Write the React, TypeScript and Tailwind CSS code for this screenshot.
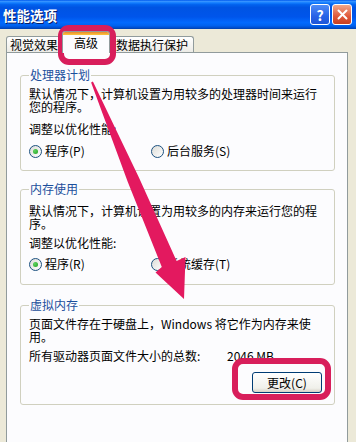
import React from "react";

const font = { fontFamily: '"Noto Sans CJK SC", "Noto Sans", sans-serif' };

function Radio({ checked }: { checked?: boolean }) {
  return (
    <span className="relative inline-flex h-[13px] w-[13px] shrink-0 items-center justify-center rounded-full border border-[#1c5180] bg-[linear-gradient(135deg,#dcdcd7,#ffffff)]">
      {checked && (
        <span className="h-[5px] w-[5px] rounded-full bg-[radial-gradient(circle_at_35%_35%,#5fd35f,#21a121)]" />
      )}
    </span>
  );
}

function Choice({ label, checked, width }: { label: string; checked?: boolean; width?: string }) {
  return (
    <div className={`flex items-center gap-[3px] ${width ?? ""}`}>
      <Radio checked={checked} />
      <span>{label}</span>
    </div>
  );
}

export default function App() {
  return (
    <div
      className="relative h-[442px] w-[356px] overflow-hidden bg-[#ece9d8] text-[12px] leading-[12px] text-black"
      style={font}
    >
      {/* title bar */}
      <div className="flex h-[29px] items-center justify-between bg-[linear-gradient(180deg,#0058ee_0%,#3593ff_5%,#127dff_10%,#0262ee_16%,#0054e3_26%,#0055eb_58%,#026afe_78%,#0062ef_88%,#0052d6_94%,#0040ab_100%)] pl-[3px] pr-[4px]">
        <span className="text-[13.5px] font-bold leading-[14px] text-white [text-shadow:1px_1px_0_#0a1f66]">
          性能选项
        </span>
        <div className="flex gap-[2px]">
          <div className="flex h-[21px] w-[20px] items-center justify-center rounded-[3px] border border-white bg-[linear-gradient(180deg,#4f8cf6,#2762e6_60%,#1e56d8)] text-[14px] font-bold text-white">
            ?
          </div>
          <div className="flex h-[21px] w-[20px] items-center justify-center rounded-[3px] border border-white bg-[linear-gradient(180deg,#f0a78a,#e0583a_60%,#c8401f)]">
            <svg width="11" height="11" viewBox="0 0 11 11">
              <path d="M1.5 1.5 L9.5 9.5 M9.5 1.5 L1.5 9.5" stroke="white" strokeWidth="2" strokeLinecap="round" />
            </svg>
          </div>
        </div>
      </div>

      {/* tabs */}
      <div className="pl-[6px]">
        <div className="flex h-[23px] items-end">
          <div className="flex h-[16px] w-[56px] items-center justify-center rounded-t-[3px] border border-b-0 border-[#919b9c] bg-[linear-gradient(180deg,#ffffff,#ecebe6)] pt-[1px]">
            视觉效果
          </div>
          <div className="relative z-10 -mb-[1px] flex h-[22px] w-[48px] flex-col rounded-t-[3px] border border-b-0 border-[#919b9c] bg-[#fcfcfe]">
            <div className="h-[3px] rounded-t-[2px] bg-[linear-gradient(180deg,#e68b2c,#ffc73c)]" />
            <div className="flex flex-1 items-center justify-center pb-[3px]">高级</div>
          </div>
          <div className="flex h-[16px] w-[84px] items-center justify-center rounded-t-[3px] border border-b-0 border-[#919b9c] bg-[linear-gradient(180deg,#ffffff,#ecebe6)] pt-[1px]">
            数据执行保护
          </div>
        </div>

        {/* panel */}
        <div className="h-[420px] w-[342px] border border-[#919b9c] bg-[#fcfcfe] pt-[16px]">
          <fieldset className="ml-[13px] w-[315px] rounded-[3px] border border-[#d0d0bf] px-[8px] pb-[12px]">
            <legend className="px-[1px] leading-[12px] text-[#1b4f9c]">处理器计划</legend>
            <div className="mt-[6px] whitespace-nowrap leading-[13px]">
              默认情况下，计算机设置为用较多的处理器时间来运行
              <br />
              您的程序。
            </div>
            <div className="mt-[10px]">调整以优化性能:</div>
            <div className="mt-[9px] flex h-[14px] items-center">
              <Choice label="程序(P)" checked width="w-[122px]" />
              <Choice label="后台服务(S)" />
            </div>
          </fieldset>

          <fieldset className="ml-[13px] mt-[12px] w-[315px] rounded-[3px] border border-[#d0d0bf] px-[8px] pb-[13px]">
            <legend className="px-[1px] leading-[12px] text-[#1b4f9c]">内存使用</legend>
            <div className="mt-[9px] whitespace-nowrap leading-[13px]">
              默认情况下，计算机设置为用较多的内存来运行您的程
              <br />
              序。
            </div>
            <div className="mt-[7px]">调整以优化性能:</div>
            <div className="mt-[8px] flex h-[14px] items-center">
              <Choice label="程序(R)" checked width="w-[122px]" />
              <Choice label="系统缓存(T)" />
            </div>
          </fieldset>

          <fieldset className="ml-[13px] mt-[14px] w-[315px] rounded-[3px] border border-[#d0d0bf] px-[8px] pb-[11px]">
            <legend className="px-[1px] leading-[12px] text-[#1b4f9c]">虚拟内存</legend>
            <div className="mt-[6px] whitespace-nowrap leading-[13px]">
              页面文件存在于硬盘上，Windows 将它作为内存来使
              <br />
              用。
            </div>
            <div className="mt-[7px] flex">
              <span className="w-[198px]">所有驱动器页面文件大小的总数:</span>
              <span>2046 MB</span>
            </div>
            <div className="mt-[10px] flex">
              <button className="ml-[223px] flex h-[21px] w-[70px] items-center justify-center rounded-[3px] border border-[#003c74] bg-[linear-gradient(180deg,#ffffff,#f0f0ea_80%,#d6d0c5)]">
                更改(C)
              </button>
            </div>
          </fieldset>
        </div>
      </div>

      {/* red annotations */}
      <svg className="pointer-events-none absolute left-0 top-0" width="356" height="442" viewBox="0 0 356 442">
        <rect x="61" y="28" width="52" height="34" rx="8" fill="none" stroke="#d81e5b" strokeWidth="6" />
        <rect x="235" y="361" width="93" height="36" rx="8" fill="none" stroke="#d81e5b" strokeWidth="6" />
        <polygon
          fill="#e3195f"
          points="92.9,81.6 138.8,177.3 176.6,260.9 185.5,257.1 184,299 155.5,272.6 161.8,267.1 127.8,181.9 91.1,82.4"
        />
      </svg>
    </div>
  );
}
